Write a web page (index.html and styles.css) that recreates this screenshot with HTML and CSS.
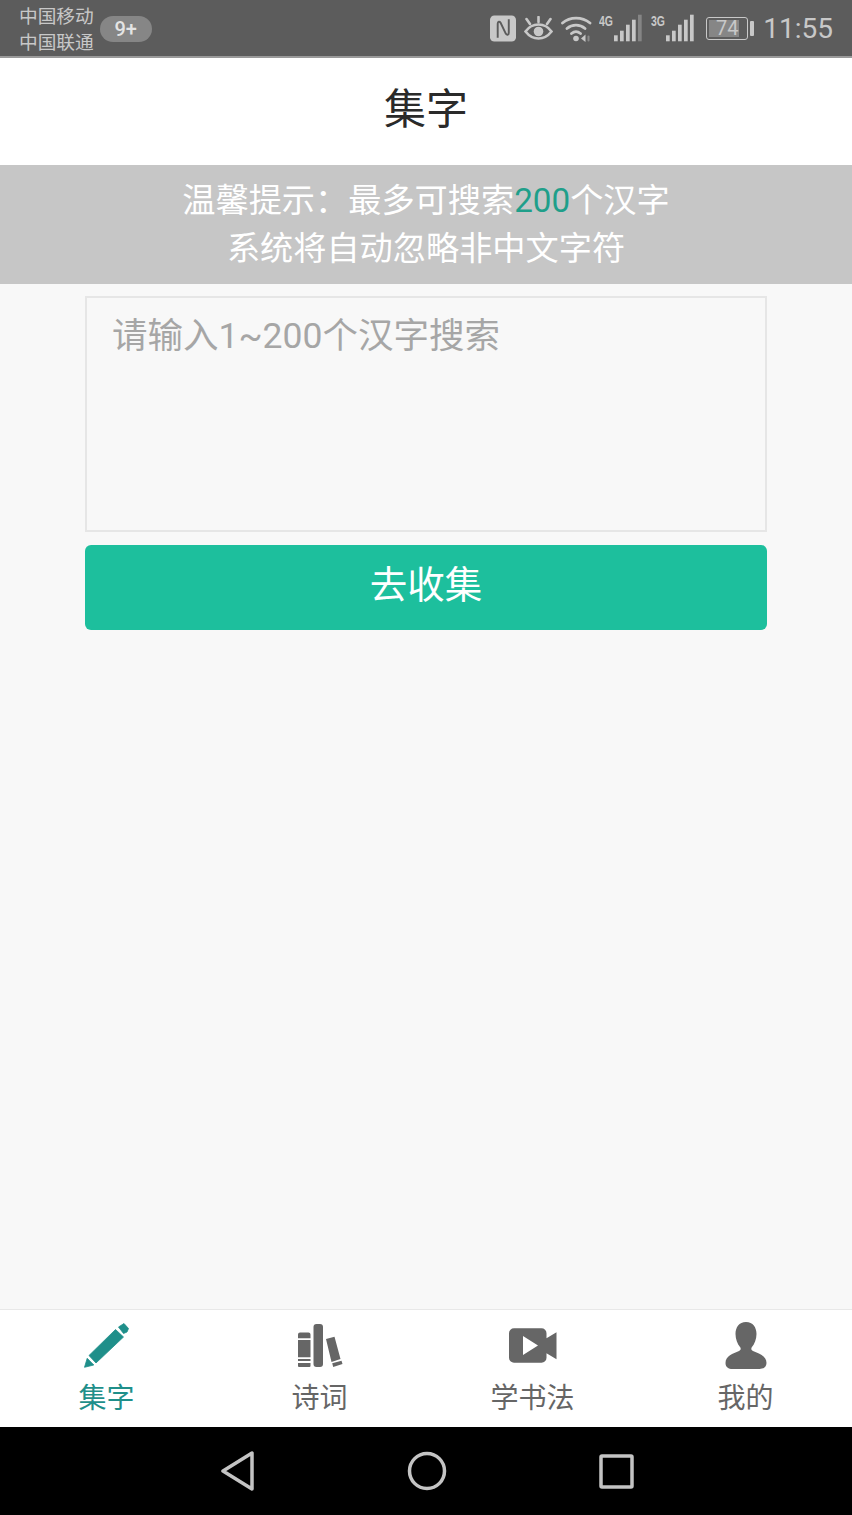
FILE: index.html
```html
<!DOCTYPE html>
<html lang="zh-CN">
<head>
<meta charset="utf-8">
<title>集字</title>
<link rel="stylesheet" href="styles.css">
</head>
<body>
<div class="app">
  <div class="statusbar">
    <div class="carriers"><span>中国移动</span><span>中国联通</span></div>
    <span class="badge">9+</span>
    <div class="status-right">
      <svg class="ic-nfc" width="26" height="27" viewBox="0 0 27 27"><rect x="0" y="0" width="27" height="27" rx="4.500" fill="#c8c8c8"/><path d="M8 23V8.500c0-2.500 2-2.500 3-1l5.500 11.500c1 1.500 3 1.500 3-1V4" fill="none" stroke="#5c5c5c" stroke-width="2"/></svg>
      <svg class="ic-eye" width="29" height="24" viewBox="0 0 29 24" fill="none" stroke="#c8c8c8" stroke-width="2.600" stroke-linecap="round"><path d="M1.500 15.500C5 10.500 9 8.500 14.500 8.500s9.500 2 13 7c-3.500 4.500-7.500 7-13 7s-9.500-2.500-13-7z"/><circle cx="14.500" cy="15.500" r="4.800" fill="#c8c8c8" stroke="none"/><path d="M2.500 3l3.500 5M14.500 1v5M26.500 3L23 8"/></svg>
      <svg class="ic-wifi" width="31" height="27" viewBox="0 0 31 27" fill="none" stroke="#c8c8c8" stroke-width="2.800" stroke-linecap="round"><path d="M1.500 8C9 1.500 21 1.500 29 8M6 13.500c5-4.500 13-4.500 18 0M10.500 18.500c3-2.500 6-2.500 9 0"/><circle cx="15" cy="23.500" r="2.800" fill="#c8c8c8" stroke="none"/><path d="M24.500 19.500l-4.500 4 4.500 3.500z" fill="#c8c8c8" stroke="none"/><path d="M27.500 21.500v4" stroke="#8a8a8a" stroke-width="2"/></svg>
      <svg class="ic-signal" width="43" height="28" viewBox="0 0 43 28"><text class="net" x="0" y="12" textLength="14" lengthAdjust="spacingAndGlyphs">4G</text><g fill="#c8c8c8"><rect x="15" y="21.300" width="3.700" height="6"/><rect x="21" y="16.700" width="3.700" height="10.600"/><rect x="27" y="10.700" width="3.700" height="16.600"/><rect x="33" y="5.700" width="3.700" height="21.600"/></g><rect x="39" y="0.700" width="3.700" height="26.600" fill="#858585"/></svg>
      <svg class="ic-signal" width="43" height="28" viewBox="0 0 43 28"><text class="net" x="0" y="12" textLength="14" lengthAdjust="spacingAndGlyphs">3G</text><g fill="#c8c8c8"><rect x="15" y="21.300" width="3.700" height="6"/><rect x="21" y="16.700" width="3.700" height="10.600"/><rect x="27" y="10.700" width="3.700" height="16.600"/><rect x="33" y="5.700" width="3.700" height="21.600"/><rect x="39" y="0.700" width="3.700" height="26.600"/></g></svg>
      <div class="battery"><div class="cell"><div class="level"></div><span>74</span></div><div class="tip"></div></div>
      <span class="time">11:55</span>
    </div>
  </div>

  <header class="titlebar">集字</header>

  <div class="notice">
    <div>温馨提示：最多可搜索<span class="accent">200</span>个汉字</div>
    <div>系统将自动忽略非中文字符</div>
  </div>

  <main class="content">
    <textarea class="search" placeholder="请输入1~200个汉字搜索"></textarea>
    <button class="go" type="button">去收集</button>
  </main>

  <nav class="tabs">
    <div class="tab active">
      <svg width="46" height="48" viewBox="0 0 46 48"><g fill="#1f8f8a" stroke="#1f8f8a" stroke-width="0.800" stroke-linejoin="round"><path d="M34.500 5l5.500-3.500 4.500 5-1.500 3.500-3.500 1.500z"/><path d="M31.500 7.500l8 7.500L12 41l-7-7.500z"/><path d="M3.200 36.300l6.600 6.700-9.300 2.300z"/></g></svg>
      <span>集字</span>
    </div>
    <div class="tab">
      <svg width="46" height="48" viewBox="0 0 46 48"><g fill="#666"><path d="M1 12.500a2 2 0 0 1 2-2h8.500a2 2 0 0 1 2 2v3.800H1zM1 18h12.500v17.300H1zM1 37h12.500v2H1zM1 41h12.500v3a1 1 0 0 1-1 1H2a1 1 0 0 1-1-1z"/><rect x="16.500" y="2" width="9.500" height="43" rx="3"/><path d="M29 17l8.500-2.300 6 22.300-9 3zM35.200 41.300l9.300-2.600 1 3.300-9.300 3z"/></g></svg>
      <span>诗词</span>
    </div>
    <div class="tab">
      <svg width="48" height="48" viewBox="0 0 48 48"><path fill="#666" fill-rule="evenodd" d="M5 6.300h27.500a5 5 0 0 1 5 5v5l10-6v27l-10-6v4.400a5 5 0 0 1-5 5H5a5 5 0 0 1-5-5V11.300a5 5 0 0 1 5-5zM14 14v19l15-9.500z"/></svg>
      <span>学书法</span>
    </div>
    <div class="tab">
      <svg width="42" height="48" viewBox="0 0 42 48"><path fill="#666" d="M21 0c7 0 10.500 5.500 10.500 12 0 5-2 10-4.500 13-1.200 1.500-.8 3 1 4 6 2.500 13.500 5 13.500 12 0 4-3 6-7 6H7.500c-4 0-7-2-7-6 0-7 7.500-9.500 13.500-12 1.800-1 2.200-2.500 1-4-2.500-3-4.500-8-4.500-13C10.500 5.500 14 0 21 0z"/></svg>
      <span>我的</span>
    </div>
  </nav>

  <div class="navbar">
    <svg width="36" height="40" viewBox="0 0 36 40" fill="none" stroke="#c4c4c4" stroke-width="3.500" stroke-linejoin="round"><path d="M33 2v36L4 20z"/></svg>
    <svg class="home" width="40" height="40" viewBox="0 0 40 40" fill="none" stroke="#c4c4c4" stroke-width="3.500"><circle cx="20" cy="20" r="17.500"/></svg>
    <svg width="35" height="35" viewBox="0 0 35 35" fill="none" stroke="#c4c4c4" stroke-width="3.500" stroke-linejoin="round"><rect x="2" y="2" width="31" height="31" rx="1"/></svg>
  </div>
</div>
</body>
</html>
```
FILE: styles.css
```css
* { box-sizing: border-box; }
html, body { margin: 0; padding: 0; }
body {
  width: 852px;
  height: 1515px;
  overflow: hidden;
  font-family: Roboto, "Noto Sans CJK SC", sans-serif;
}
.app {
  display: flex;
  flex-direction: column;
  height: 1515px;
  background: #f8f8f8;
}
.statusbar {
  flex: 0 0 58px;
  display: flex;
  align-items: center;
  padding: 0 19px 0 19px;
  background: #5c5c5c;
  border-bottom: 2px solid #9a9a9a;
  color: #c8c8c8;
}
.carriers {
  display: flex;
  flex-direction: column;
  font-size: 18.700px;
  line-height: 26px;
  margin-top: 3px;
}
.badge {
  width: 52px;
  height: 26px;
  margin-left: 6px;
  margin-top: 2px;
  border-radius: 13px;
  background: #868686;
  color: #e4e4e4;
  font-size: 20px;
  font-weight: 500;
  line-height: 26px;
  text-align: center;
}
.status-right {
  margin-left: auto;
  display: flex;
  align-items: center;
}
.ic-nfc { margin-right: 8px; }
.ic-eye { margin-right: 8px; }
.ic-wifi { margin-right: 7px; }
.ic-signal { margin-right: 9px; }
.ic-signal + .ic-signal { margin-right: 12px; }
.net {
  font-family: "Liberation Sans", sans-serif;
  font-size: 14px;
  font-weight: 700;
  fill: #c8c8c8;
}
.battery {
  display: flex;
  align-items: center;
  gap: 2px;
  margin-right: 9px;
}
.cell {
  position: relative;
  width: 42px;
  height: 23px;
  border: 1.500px solid #c8c8c8;
  border-radius: 3px;
  text-align: center;
  font-size: 20px;
  line-height: 20px;
}
.cell span { position: relative; }
.level {
  position: absolute;
  left: 2px;
  top: 2px;
  bottom: 2px;
  width: 74%;
  background: #868686;
}
.tip {
  width: 4px;
  height: 15px;
  border-radius: 1px;
  background: #c8c8c8;
}
.time {
  margin-top: 2px;
  font-size: 28px;
  line-height: 32px;
}
.titlebar {
  flex: 0 0 107px;
  background: #fff;
  color: #2a2a2a;
  font-size: 42px;
  line-height: 104px;
  text-align: center;
}
.notice {
  flex: 0 0 119px;
  padding-top: 12px;
  background: #c6c6c6;
  color: #fff;
  font-size: 33.200px;
  line-height: 48px;
  text-align: center;
}
.accent { color: #1f9f8a; }
.content {
  flex: 1;
  display: flex;
  flex-direction: column;
  align-items: center;
  padding-top: 12px;
  gap: 13px;
}
.search {
  display: block;
  width: 682px;
  height: 236px;
  padding: 14px 25px;
  border: 2px solid #e6e6e6;
  border-radius: 0;
  outline: none;
  resize: none;
  background: #f8f8f8;
  font-family: inherit;
  font-size: 35.500px;
  line-height: 48px;
}
.search::placeholder { color: #a6a6a6; opacity: 1; }
.go {
  width: 682px;
  height: 85px;
  padding: 0 0 12px;
  border: 0;
  border-radius: 6px;
  background: #1dbf9d;
  color: #fff;
  font-family: inherit;
  font-size: 37.500px;
}
.tabs {
  flex: 0 0 118px;
  display: grid;
  grid-template-columns: repeat(4, 1fr);
  background: #fff;
  border-top: 1px solid #e8e8e8;
}
.tab {
  display: flex;
  flex-direction: column;
  align-items: center;
  padding-top: 12px;
  gap: 10px;
  color: #666;
  font-size: 28px;
  line-height: 38px;
}
.tab svg { display: block; }
.tab.active { color: #1f8f8a; }
.navbar {
  flex: 0 0 88px;
  display: flex;
  align-items: center;
  justify-content: center;
  background: #000;
}
.home { margin: 0 152px; }
```
